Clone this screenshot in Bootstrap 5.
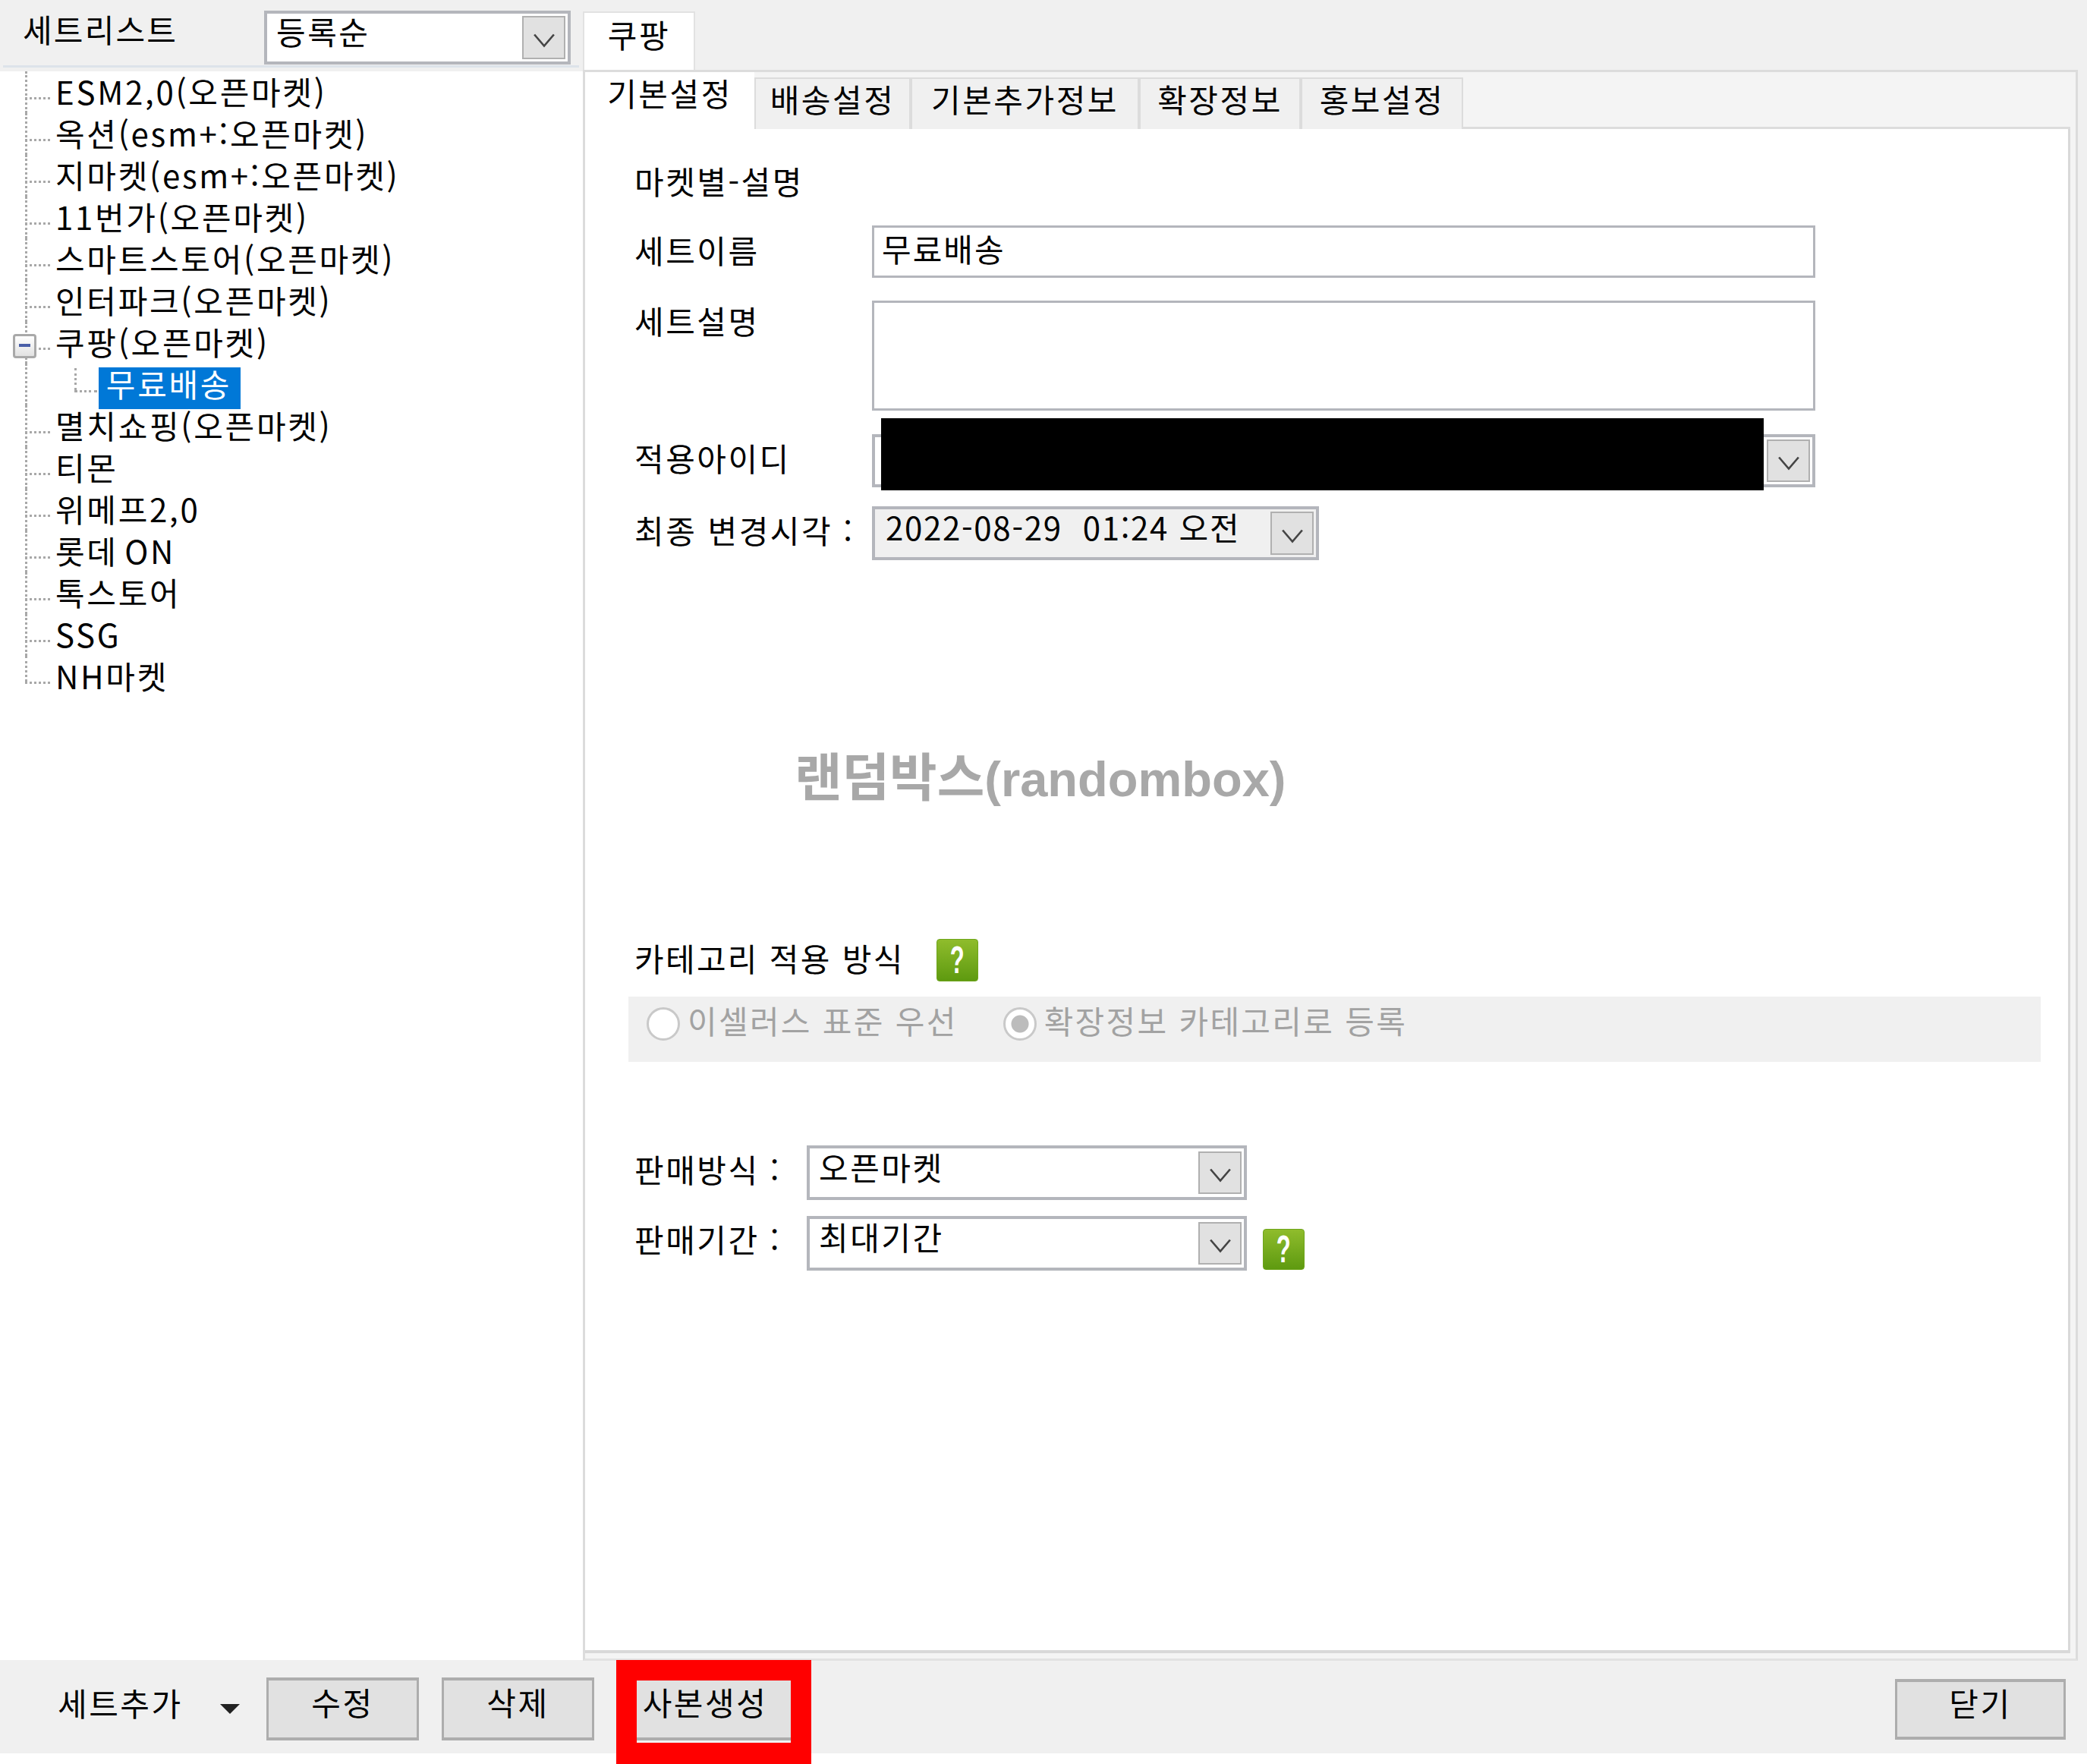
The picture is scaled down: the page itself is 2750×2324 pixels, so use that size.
<!DOCTYPE html>
<html lang="ko">
<head>
<meta charset="utf-8">
<title>세트리스트</title>
<link href="https://cdn.jsdelivr.net/npm/bootstrap@5.3.0/dist/css/bootstrap.min.css" rel="stylesheet">
<style>
html,body{margin:0;background:#fff;}
body{width:2750px;height:2324px;overflow:hidden;font-family:"Noto Sans CJK KR","Liberation Sans",sans-serif;font-size:42px;font-weight:400;letter-spacing:2.5px;color:#000;line-height:1.2;}
.app-main{height:2192px;background:#f0f0f0;}
.left-pane{width:768px;}
.left-head{height:99px;position:relative;}
.left-head::after{content:"";position:absolute;left:4px;width:759px;top:86px;height:3px;background:#dde3ea;}
.left-title{position:absolute;left:30px;top:13px;letter-spacing:2.2px;}
.combo{background:#fff;border:4px solid #b4b6bc;display:flex;align-items:center;padding-left:12px;box-sizing:border-box;position:relative;}
.combo-sort{position:absolute;left:348px;top:14px;width:404px;height:71px;}
.combo-text{margin-top:-16px;white-space:pre;}
.combo-arrow{position:absolute;right:3px;top:3px;bottom:3px;width:57px;background:#e1e1e1;border:2px solid #b0b0b0;display:flex;align-items:center;justify-content:center;padding-top:6px;}
.combo-arrow svg{width:30px;height:22px;display:block;}
.tree-pane{height:2093px;background:#fff;}
.tree-list{margin:-5px 0 0;padding:0;list-style:none;}
.tree-row{height:55px;line-height:51px;padding-left:73px;position:relative;white-space:nowrap;letter-spacing:2.7px;word-spacing:-6px;}
.tree-row::before{content:"";position:absolute;left:33px;top:0;bottom:0;border-left:3px dotted #a8a8a8;}
.tree-row::after{content:"";position:absolute;left:33px;width:33px;top:34px;border-top:3px dotted #a8a8a8;}
.tree-row.is-last::before{bottom:21px;}
.tree-row.is-child{padding-left:137px;}
.tree-row.is-child::after{left:98px;width:30px;top:35px;}
.tree-child-line{position:absolute;left:98px;top:6px;height:29px;border-left:3px dotted #a8a8a8;}
.tree-sel{position:absolute;left:130px;top:5px;width:187px;height:55px;background:#0078d7;color:#fff;text-align:center;line-height:42px;padding-right:2px;}
.tree-box{position:absolute;left:17px;top:16px;width:31px;height:32px;background:linear-gradient(#fff,#e2e2e2);border:3px solid #a9a9a9;border-radius:4px;z-index:1;}
.tree-box::after{content:"";position:absolute;left:5px;right:5px;top:10px;height:4px;background:#4a5fa8;}
.right-pane{width:1970px;}
.outer-tab{margin-top:15px;width:148px;height:77px;background:#fff;border:2px solid #e2e2e2;border-bottom:0;text-align:center;line-height:56px;}
.outer-panel{height:2096px;background:#f4f4f4;border:3px solid #dcdcdc;border-bottom-color:#e2e2e2;padding:0 7px 7px 0;position:relative;}
.inner-tabs{height:75px;margin:0;padding:0;border:0;list-style:none;}
.inner-tabs .nav-link{border-radius:0;color:#000;background:#f0f0f0;border:2px solid #dcdcdc;border-bottom:0;margin:7px 0 0;height:68px;padding:0;text-align:center;line-height:52px;box-sizing:border-box;}
.inner-tabs .nav-link.active{background:#fff;color:#000;margin-top:0;height:75px;border-top:0;border-right:0;border-left:0;line-height:54px;}
.tw1{width:223px}.tw2{width:206px}.tw3{width:301px}.tw4{width:213px}.tw5{width:214px}
.page-area{height:2008px;background:#fff;border:solid #d9d9d9;border-width:0 3px 4px 0;padding:43px 0 0 65px;position:relative;}
.tab-filler{flex:1;border-bottom:3px solid #dcdcdc;}
.heading-row{height:50px;line-height:50px;}
.form-line{display:flex;position:relative;}
.lab{width:313px;flex:none;white-space:pre;}
.lab-short{width:227px;flex:none;white-space:pre;}
.win-input.form-control{width:1243px;height:69px;border-radius:0;border:3px solid #b4b6bc;padding:0 10px 10px;font-size:42px;font-weight:400;letter-spacing:2px;color:#000;line-height:53px;box-shadow:none;resize:none;}
.win-input.form-control.tall{height:145px;}
.l-name{margin-top:34px;align-items:center;}
.l-name .lab{margin-top:-4px;}
.l-desc{margin-top:30px;}
.l-desc .lab{line-height:52px;}
.l-id{margin-top:31px;align-items:center;height:70px;}
.l-id .lab,.l-date .lab{margin-top:-8px;}
.combo-id{width:1243px;height:70px;}
.redact{position:absolute;left:325px;top:-21px;width:1163px;height:95px;background:#000;}
.l-date{margin-top:25px;align-items:center;height:71px;}
.combo-date{width:589px;height:71px;background:#f0f0f0;padding-left:14px;letter-spacing:1.7px;}
.l-cat{margin-top:499px;height:56px;display:flex;align-items:center;letter-spacing:2.3px;}
.l-cat>span:first-child{margin-top:-6px;}
.help-mark{width:55px;height:56px;border-radius:4px;background:linear-gradient(#8fbc2c,#5e9a10);border:1px solid #6ea51b;color:#fff;font:700 50px/54px "Liberation Sans",sans-serif;text-align:center;letter-spacing:0;flex:none;}
.help-mark span{display:inline-block;transform:scaleX(.62);}
.l-cat .help-mark{margin-left:42px;}
.radio-strip{margin:20px 0 0 -8px;width:1861px;height:86px;background:#f0f0f0;display:flex;padding:14px 0 0 24px;color:#a2a2a2;letter-spacing:2.3px;}
.radio-strip .form-check-input{width:44px;height:44px;margin:0;flex:none;background:#fff;border:3px solid #c9c9c9;opacity:1;float:none;}
.radio-strip .form-check-input:checked{background:radial-gradient(circle,#bcbcbc 0 11px,#fff 12px);border-color:#c9c9c9;}
.radio-item{display:flex;align-items:flex-start;line-height:34px;opacity:1;}
.radio-item span{margin-left:10px;white-space:nowrap;}
.radio-item+.radio-item{margin-left:60px;}
.l-sale{margin-top:110px;align-items:center;height:72px;}
.l-sale .lab-short{margin-top:-10px;}
.combo-sale{width:580px;height:72px;padding-left:12px;}
.combo-sale .combo-arrow{top:4px;bottom:4px;}
.l-period{margin-top:21px;height:71px;}
.l-period .help-mark{position:absolute;left:828px;top:17px;height:54px;line-height:52px;}
.watermark{position:absolute;left:276px;top:814px;font:700 65px/72px "Liberation Sans","Noto Sans CJK KR",sans-serif;color:#a8a8a8;letter-spacing:0;white-space:nowrap;}
.watermark b{font-family:"Noto Sans CJK KR",sans-serif;font-weight:700;font-size:68px;}
.app-foot{height:118px;background:#f0f0f0;position:relative;display:flex;align-items:flex-start;}
.foot-add{margin:28px 0 0 76px;width:275px;display:flex;letter-spacing:2.5px;line-height:46px;}
.foot-caret{width:0;height:0;border-left:13px solid transparent;border-right:13px solid transparent;border-top:13px solid #222;margin:25px 0 0 49px;}
.win-btn.btn{background:#e1e1e1;border:solid #adadad;border-width:4px 3px;border-radius:0;height:83px;width:201px;padding:0 0 19px;color:#000;font-size:42px;font-weight:400;letter-spacing:2.5px;line-height:46px;margin-top:18px;}
.btn-gap{margin-left:30px;}
.win-btn.btn.btn-copy{margin-left:30px;width:232px;}
.win-btn.btn.btn-close-win{margin-left:auto;margin-right:28px;width:225px;margin-top:20px;height:80px;padding-bottom:18px;}
.red-frame{position:absolute;left:812px;top:-5px;width:257px;height:137px;border:27px solid #f00;border-bottom-width:28px;pointer-events:none;}
</style>
</head>
<body>
<div class="app-main d-flex">
  <div class="left-pane">
    <div class="left-head">
      <div class="left-title">세트리스트</div>
      <div class="combo combo-sort"><span class="combo-text">등록순</span><span class="combo-arrow"><svg viewBox="0 0 28 20"><path d="M2 3 14 17 26 3" fill="none" stroke="#444" stroke-width="2.5"/></svg></span></div>
    </div>
    <div class="tree-pane">
      <ul class="tree-list">
        <li class="tree-row">ESM2,0(오픈마켓)</li>
        <li class="tree-row">옥션(esm+:오픈마켓)</li>
        <li class="tree-row">지마켓(esm+:오픈마켓)</li>
        <li class="tree-row">11번가(오픈마켓)</li>
        <li class="tree-row">스마트스토어(오픈마켓)</li>
        <li class="tree-row">인터파크(오픈마켓)</li>
        <li class="tree-row"><span class="tree-box"></span>쿠팡(오픈마켓)</li>
        <li class="tree-row is-child"><span class="tree-child-line"></span><span class="tree-sel">무료배송</span></li>
        <li class="tree-row">멸치쇼핑(오픈마켓)</li>
        <li class="tree-row">티몬</li>
        <li class="tree-row">위메프2,0</li>
        <li class="tree-row">롯데 ON</li>
        <li class="tree-row">톡스토어</li>
        <li class="tree-row">SSG</li>
        <li class="tree-row is-last">NH마켓</li>
      </ul>
    </div>
  </div>
  <div class="right-pane">
    <div class="outer-tab">쿠팡</div>
    <div class="outer-panel">
      <ul class="nav nav-tabs inner-tabs flex-nowrap">
        <li class="nav-item tw1"><a class="nav-link active" href="#">기본설정</a></li>
        <li class="nav-item tw2"><a class="nav-link" href="#">배송설정</a></li>
        <li class="nav-item tw3"><a class="nav-link" href="#">기본추가정보</a></li>
        <li class="nav-item tw4"><a class="nav-link" href="#">확장정보</a></li>
        <li class="nav-item tw5"><a class="nav-link" href="#">홍보설정</a></li>
        <li class="tab-filler"></li>
      </ul>
      <div class="page-area">
        <div class="heading-row">마켓별-설명</div>
        <div class="form-line l-name"><div class="lab">세트이름</div><input class="form-control win-input" value="무료배송"></div>
        <div class="form-line l-desc"><div class="lab">세트설명</div><textarea class="form-control win-input tall"></textarea></div>
        <div class="form-line l-id"><div class="lab">적용아이디</div><div class="combo combo-id"><span class="combo-arrow"><svg viewBox="0 0 28 20"><path d="M2 3 14 17 26 3" fill="none" stroke="#444" stroke-width="2.5"/></svg></span></div><div class="redact"></div></div>
        <div class="form-line l-date"><div class="lab">최종 변경시각 :</div><div class="combo combo-date"><span class="combo-text">2022-08-29  01:24 오전</span><span class="combo-arrow"><svg viewBox="0 0 28 20"><path d="M2 3 14 17 26 3" fill="none" stroke="#444" stroke-width="2.5"/></svg></span></div></div>
        <div class="l-cat"><span>카테고리 적용 방식</span><div class="help-mark"><span>?</span></div></div>
        <div class="radio-strip">
          <label class="radio-item"><input class="form-check-input" type="radio" name="cat" disabled><span>이셀러스 표준 우선</span></label>
          <label class="radio-item"><input class="form-check-input" type="radio" name="cat" checked disabled><span>확장정보 카테고리로 등록</span></label>
        </div>
        <div class="form-line l-sale"><div class="lab-short">판매방식 :</div><div class="combo combo-sale"><span class="combo-text">오픈마켓</span><span class="combo-arrow"><svg viewBox="0 0 28 20"><path d="M2 3 14 17 26 3" fill="none" stroke="#444" stroke-width="2.5"/></svg></span></div></div>
        <div class="form-line l-sale l-period"><div class="lab-short">판매기간 :</div><div class="combo combo-sale"><span class="combo-text">최대기간</span><span class="combo-arrow"><svg viewBox="0 0 28 20"><path d="M2 3 14 17 26 3" fill="none" stroke="#444" stroke-width="2.5"/></svg></span></div><div class="help-mark"><span>?</span></div></div>
        <div class="watermark"><b>랜덤박스</b>(randombox)</div>
      </div>
    </div>
  </div>
</div>
<div class="app-foot">
  <div class="foot-add"><span>세트추가</span><span class="foot-caret"></span></div>
  <button class="btn win-btn">수정</button>
  <button class="btn win-btn btn-gap">삭제</button>
  <button class="btn win-btn btn-copy">사본생성</button>
  <button class="btn win-btn btn-close-win">닫기</button>
  <div class="red-frame"></div>
</div>
<script src="https://cdn.jsdelivr.net/npm/bootstrap@5.3.0/dist/js/bootstrap.bundle.min.js"></script>
</body>
</html>
